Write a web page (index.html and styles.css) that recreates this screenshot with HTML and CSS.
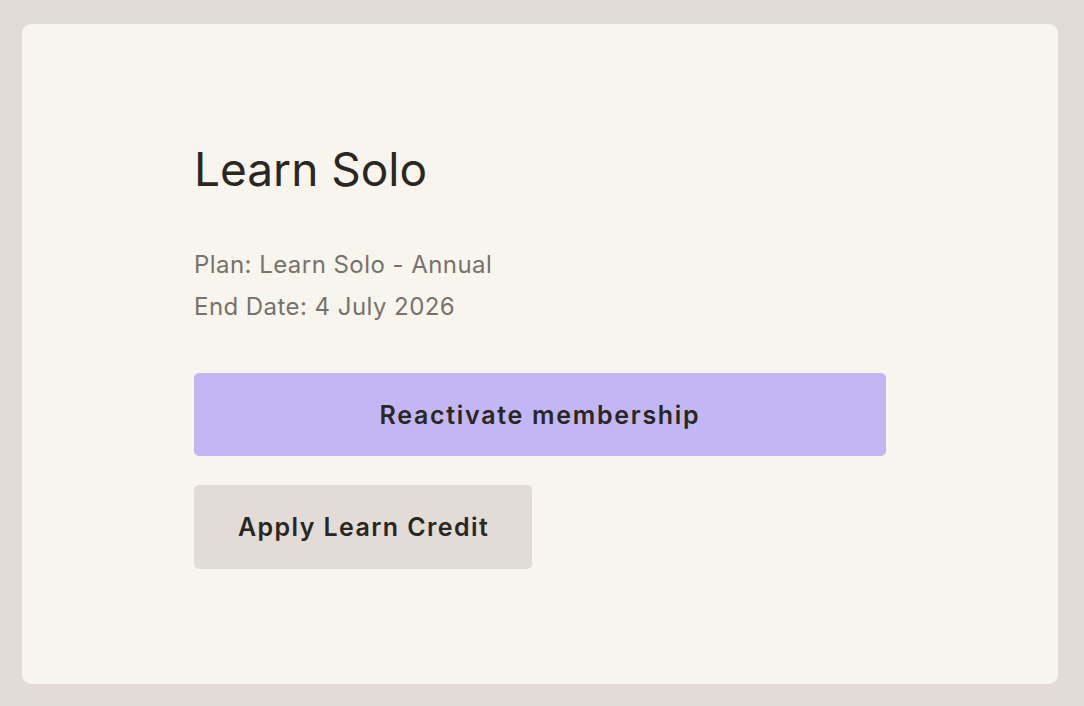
FILE: index.html
```html
<!DOCTYPE html>
<html lang="en">
<head>
<meta charset="utf-8">
<title>Learn Solo</title>
<link rel="stylesheet" href="styles.css">
</head>
<body>
  <main class="card">
    <section class="plan">
      <h1 class="plan-title">Learn Solo</h1>
      <div class="plan-details">
        <p>Plan: Learn Solo - Annual</p>
        <p>End Date: 4 July 2026</p>
      </div>
      <button class="btn btn-primary" type="button">Reactivate membership</button>
      <button class="btn btn-secondary" type="button">Apply Learn Credit</button>
    </section>
  </main>
</body>
</html>
```

FILE: styles.css
```css
html, body {
  margin: 0;
  padding: 0;
}

body {
  background: #e3dcd6;
  font-family: Inter, "Noto Sans", sans-serif;
  color: #2a2723;
  padding: 24px 26px 22px 22px;
  box-sizing: border-box;
  width: 1084px;
  height: 706px;
}

.card {
  background: #f8f5ef;
  border-radius: 9px;
  height: 660px;
  box-sizing: border-box;
  padding: 117px 0 0 172px;
}

.plan {
  width: 692px;
  display: flex;
  flex-direction: column;
  align-items: flex-start;
}

.plan-title {
  margin: 0;
  font-size: 46px;
  line-height: 56px;
  font-weight: 400;
  letter-spacing: 0;
  color: #2a2723;
}

.plan-details {
  margin-top: 47px;
  color: #76726c;
  font-size: 24px;
  line-height: 42px;
  letter-spacing: 0.45px;
}

.plan-details p {
  margin: 0;
}

.btn {
  font-family: inherit;
  font-size: 25px;
  font-weight: 600;
  letter-spacing: 1.7px;
  color: #2a2723;
  border: none;
  border-radius: 5px;
  cursor: pointer;
}

.btn-primary {
  margin-top: 45px;
  width: 692px;
  height: 83px;
  background: #c2b7f4;
}

.btn-secondary {
  margin-top: 29px;
  height: 84px;
  padding: 0 43px 0 44px;
  letter-spacing: 1.4px;
  background: #e3dcd6;
}
```
